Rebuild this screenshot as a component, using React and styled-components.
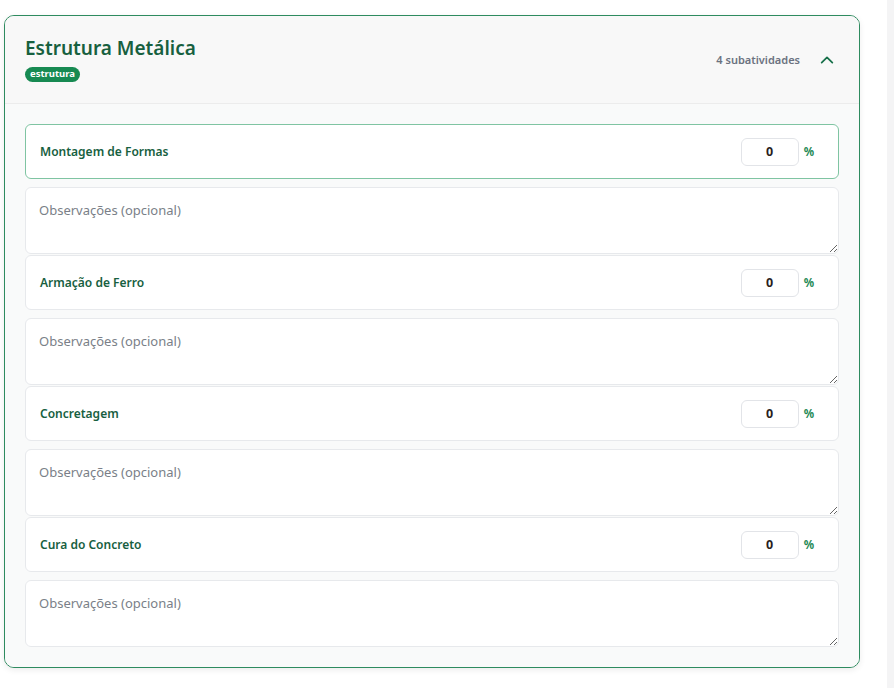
import React from "react";
import styled, { createGlobalStyle } from "styled-components";

const Global = createGlobalStyle`
  html, body { margin: 0; padding: 0; background: #ffffff; }
  body { font-family: "Noto Sans", "Open Sans", Arial, sans-serif; }
  * { box-sizing: border-box; }
`;

const Page = styled.div`
  display: flex;
  width: 894px;
  height: 688px;
  overflow: hidden;
`;

const Main = styled.div`
  flex: 1;
  padding: 15px 27px 0 4px;
`;

const Track = styled.div`
  width: 7px;
  background: #f4f4f5;
`;

const Card = styled.section`
  border: 1px solid #2e8b5f;
  border-radius: 10px;
  background: #f9fafa;
  overflow: hidden;
  box-shadow: 0 2px 6px rgba(0, 0, 0, 0.08);
`;

const Header = styled.header`
  display: flex;
  align-items: center;
  justify-content: space-between;
  height: 88px;
  padding: 0 24px 0 20px;
  background: #f8f8f8;
  border-bottom: 1px solid #ececec;
`;

const TitleBlock = styled.div`
  display: flex;
  flex-direction: column;
  align-items: flex-start;
  gap: 8px;
  padding-bottom: 1px;
`;

const Title = styled.h2`
  margin: 0;
  font-size: 19px;
  font-weight: 600;
  color: #17603f;
  line-height: 22px;
`;

const Badge = styled.span`
  display: inline-block;
  background: #178a52;
  color: #ffffff;
  font-size: 9.5px;
  font-weight: 700;
  line-height: 14px;
  padding: 0 5px 1px;
  border-radius: 8px;
`;

const HeaderRight = styled.div`
  display: flex;
  align-items: center;
  gap: 19px;
`;

const Count = styled.span`
  font-size: 11px;
  font-weight: 600;
  color: #6b7280;
`;

const Body = styled.div`
  display: flex;
  flex-direction: column;
  gap: 1px;
  padding: 20px 20px 20px 20px;
  background: #f9fafa;
`;

const Group = styled.div`
  display: flex;
  flex-direction: column;
  gap: 8px;
`;

const Row = styled.div`
  display: flex;
  align-items: center;
  justify-content: space-between;
  height: 55px;
  padding: 0 24px 0 14px;
  background: #ffffff;
  border: 1px solid ${(p) => (p.$active ? "#7fc4a2" : "#e7e9ec")};
  border-radius: 6px;
`;

const RowLabel = styled.span`
  font-size: 12px;
  font-weight: 600;
  color: #17603f;
`;

const PercentWrap = styled.div`
  display: flex;
  align-items: center;
  gap: 5px;
`;

const NumberInput = styled.input`
  width: 58px;
  height: 28px;
  border: 1px solid #e2e4e8;
  border-radius: 6px;
  background: #ffffff;
  text-align: center;
  font-family: inherit;
  font-size: 12.5px;
  font-weight: 700;
  color: #2a1e1e;
  outline: none;
  padding: 0;
`;

const Pct = styled.span`
  font-size: 11.5px;
  font-weight: 700;
  color: #1f8a56;
`;

const Notes = styled.textarea`
  display: block;
  width: 100%;
  height: 67px;
  resize: vertical;
  border: 1px solid #e7e9ec;
  border-radius: 6px;
  background: #ffffff;
  padding: 13px 13px;
  font-family: inherit;
  font-size: 13px;
  color: #374151;
  outline: none;
  &::placeholder { color: #7a7f88; }
`;

const Chevron = () => (
  <svg width="16" height="16" viewBox="0 0 24 24" fill="none" stroke="#17704a" strokeWidth="2.6" strokeLinecap="round" strokeLinejoin="round">
    <path d="M4 16 L12 8 L20 16" />
  </svg>
);

const items = ["Montagem de Formas", "Armação de Ferro", "Concretagem", "Cura do Concreto"];

export default function App() {
  return (
    <Page>
      <Global />
      <Main>
        <Card>
          <Header>
            <TitleBlock>
              <Title>Estrutura Metálica</Title>
              <Badge>estrutura</Badge>
            </TitleBlock>
            <HeaderRight>
              <Count>4 subatividades</Count>
              <Chevron />
            </HeaderRight>
          </Header>
          <Body>
            {items.map((name, i) => (
              <Group key={name}>
                <Row $active={i === 0}>
                  <RowLabel>{name}</RowLabel>
                  <PercentWrap>
                    <NumberInput type="text" defaultValue="0" />
                    <Pct>%</Pct>
                  </PercentWrap>
                </Row>
                <Notes placeholder="Observações (opcional)" />
              </Group>
            ))}
          </Body>
        </Card>
      </Main>
      <Track />
    </Page>
  );
}
